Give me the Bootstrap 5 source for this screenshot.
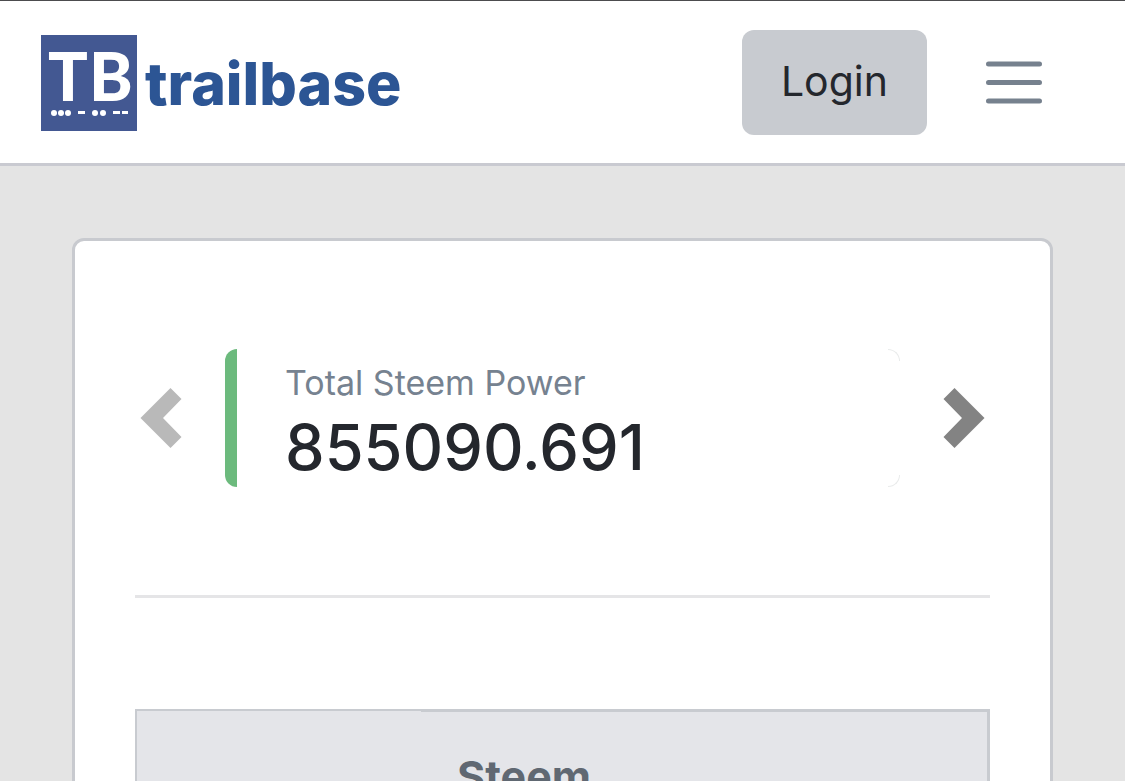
<!DOCTYPE html>
<html lang="en">
<head>
<meta charset="utf-8">
<meta name="viewport" content="width=device-width, initial-scale=1">
<title>trailbase</title>
<link href="https://cdn.jsdelivr.net/npm/bootstrap@5.3.0/dist/css/bootstrap.min.css" rel="stylesheet">
<style>
  body { font-family: Inter, "Liberation Sans", sans-serif; background: #e4e4e4; color: #24272d; }
  .site-nav { background: #fff; border-top: 1px solid #4c4c4e; border-bottom: 3px solid #c9cad1; padding: 29px 40px 28px; }
  .brand-art { display: block; width: 368px; height: 96px; font-family: Lato, sans-serif; font-weight: 900; }
  .brand-word { font-family: Inter, sans-serif; font-weight: 800; }
  .btn-login { --bs-btn-bg: #c8cbd0; --bs-btn-color: #24272d; --bs-btn-hover-bg: #b9bdc3; border: 0; border-radius: 12px; height: 105px; padding: 0 39px 3px; font-size: 41px; line-height: 60px; }
  .menu-btn { border: 0; padding: 0 43px; }
  .page-main { padding: 72px 72px 0; }
  .panel { border: 3px solid #c8cacf; border-radius: 12px; padding: 108px 60px 60px; }
  .arrow-btn { width: 52px; color: #838383; }
  .arrow-btn:disabled { color: #b9b9b9; opacity: 1; border-color: transparent; }
  .stat { border-left: 12px solid #6cba7d; border-radius: 12px; height: 138px; margin: 0 38px; padding: 8px 0 0 48px; }
  .stat::before, .stat::after { content: ""; position: absolute; right: 0; width: 12px; height: 12px; border-right: 1px solid #e9ebeb; }
  .stat::before { top: 0; border-top: 1px solid #e9ebeb; border-top-right-radius: 12px; }
  .stat::after { bottom: 0; border-bottom: 1px solid #e9ebeb; border-bottom-right-radius: 12px; }
  .stat-label { color: #768290; font-size: 34px; line-height: 52px; }
  .stat-value { font-size: 63px; line-height: 76px; font-weight: 500; }
  .divider { border-top: 3px solid #e5e5e7; margin: 108px 0 111px; opacity: 1; }
  .data-grid { width: 100%; table-layout: fixed; border-collapse: separate; border-spacing: 0; }
  .data-grid th, .data-grid td { background: #e4e5e9; border: 0 solid #c8cbd0; border-top-width: 3px; padding: 34px 0; text-align: center; color: #606872; font-size: 43px; line-height: 60px; font-weight: 700; }
  .data-grid .first-col { width: 33.5%; border-top-width: 2px; border-left-width: 2px; }
  .data-grid .mid-col { width: 24%; }
  .data-grid .last-col { border-right-width: 3px; }
</style>
</head>
<body>
<nav class="site-nav d-flex align-items-center justify-content-between">
  <a href="#" class="text-decoration-none" aria-label="trailbase">
    <svg class="brand-art" viewBox="0 0 368 96">
      <rect x="1" width="96" height="96" fill="#435892"/>
      <g fill="#fff">
        <text x="8" y="66" font-size="66">T</text>
        <text x="49" y="66" font-size="66">B</text>
        <circle cx="14" cy="78" r="3"/><circle cx="21" cy="78" r="3"/><circle cx="28" cy="78" r="3"/>
        <rect x="38" y="76" width="7" height="3"/>
        <circle cx="55" cy="78" r="3"/><circle cx="63" cy="78" r="3"/>
        <rect x="73" y="76" width="7" height="3"/><rect x="82" y="76" width="6" height="3"/>
      </g>
      <text class="brand-word" x="105" y="70" font-size="59" fill="#2c5594">trailbase</text>
    </svg>
  </a>
  <div class="d-flex align-items-center gap-3">
    <button type="button" class="btn btn-login">Login</button>
    <button type="button" class="btn menu-btn" aria-label="Menu">
      <svg class="d-block" width="56" height="44" viewBox="0 0 56 44" stroke="#76818e" stroke-width="5" stroke-linecap="round"><path d="M2.500 3H53.500M2.500 21.500H53.500M2.500 40H53.500"/></svg>
    </button>
  </div>
</nav>
<main class="page-main">
  <section class="panel bg-white">
    <div class="d-flex align-items-center">
      <button type="button" class="btn arrow-btn p-0 border-0 d-flex justify-content-center" disabled aria-label="Previous">
        <svg width="42" height="60" viewBox="0 0 42 60" fill="currentColor"><path d="M.5 30 30.500 0 41.500 11 23 30 41.500 49 30.500 60Z"/></svg>
      </button>
      <div class="stat position-relative flex-grow-1">
        <div class="stat-label">Total Steem Power</div>
        <div class="stat-value">855090.691</div>
      </div>
      <button type="button" class="btn arrow-btn p-0 border-0 d-flex justify-content-center" aria-label="Next">
        <svg width="42" height="60" viewBox="0 0 42 60" fill="currentColor"><path d="M41.500 30 11.500 0 .5 11 19 30 .5 49 11.500 60Z"/></svg>
      </button>
    </div>
    <hr class="divider">
    <table class="data-grid">
      <thead><tr><td class="first-col"></td><th class="mid-col" scope="col">Steem</th><td class="last-col"></td></tr></thead>
    </table>
  </section>
</main>
<script src="https://cdn.jsdelivr.net/npm/bootstrap@5.3.0/dist/js/bootstrap.bundle.min.js"></script>
</body>
</html>
